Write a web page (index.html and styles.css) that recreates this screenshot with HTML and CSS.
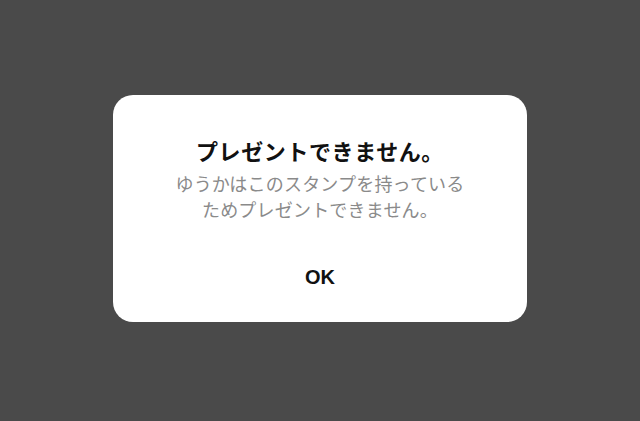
FILE: index.html
```html
<!DOCTYPE html>
<html lang="ja">
<head>
<meta charset="utf-8">
<link rel="stylesheet" href="styles.css">
</head>
<body>
<div class="overlay">
  <div class="dialog">
    <div class="title">プレゼントできません。</div>
    <div class="message">ゆうかはこのスタンプを持っている<br>ためプレゼントできません。</div>
    <div class="ok">OK</div>
  </div>
</div>
</body>
</html>
```
FILE: styles.css
```css
html, body {
  margin: 0;
  padding: 0;
  width: 640px;
  height: 421px;
  background: #4a4a4a;
  overflow: hidden;
}
.overlay {
  width: 640px;
  height: 421px;
  display: flex;
  align-items: flex-start;
  justify-content: center;
}
.dialog {
  margin-top: 95px;
  width: 414px;
  height: 227px;
  box-sizing: border-box;
  background: #ffffff;
  border-radius: 20px;
  display: flex;
  flex-direction: column;
  align-items: center;
  padding-top: 39px;
  font-family: "Noto Sans CJK JP", "Liberation Sans", sans-serif;
}
.title {
  font-size: 22px;
  font-weight: 700;
  color: #111111;
  line-height: 32px;
  letter-spacing: 0.6px;
}
.message {
  font-size: 18px;
  color: #8a8a8a;
  line-height: 26px;
  text-align: center;
  margin-top: 4px;
  letter-spacing: 0.2px;
}
.ok {
  font-family: "Liberation Sans", sans-serif;
  font-size: 20px;
  font-weight: 700;
  color: #111111;
  margin-top: 44px;
}
```
